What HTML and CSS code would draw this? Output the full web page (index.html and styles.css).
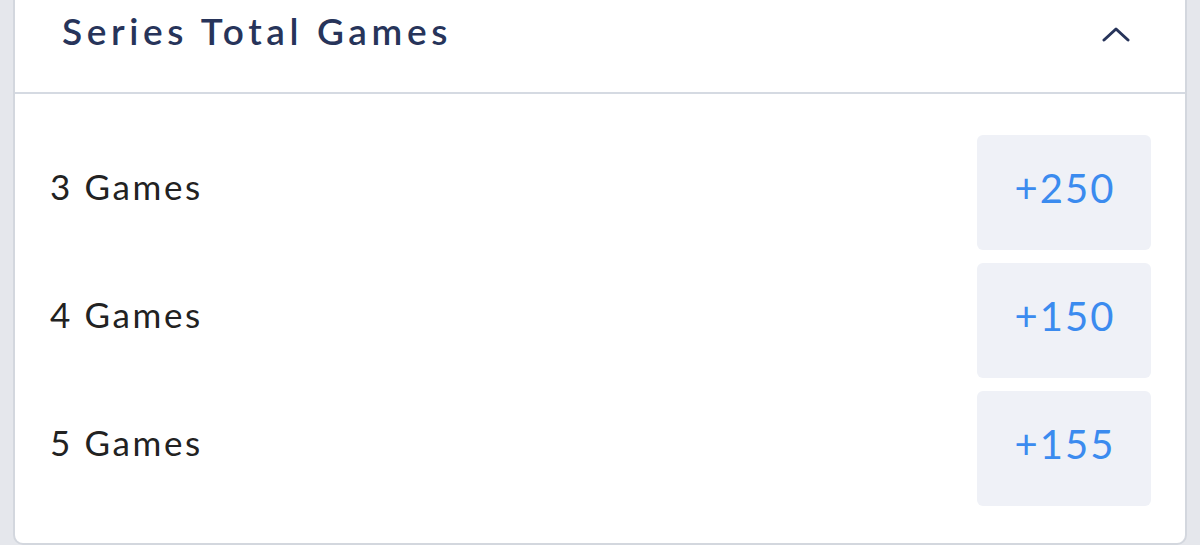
FILE: index.html
```html
<!DOCTYPE html>
<html lang="en">
<head>
  <meta charset="UTF-8">
  <meta name="viewport" content="width=device-width, initial-scale=1.0">
  <title>Series Total Games</title>
  <link rel="stylesheet" href="styles.css">
</head>
<body>
  <div class="market-card">
    <div class="market-header">
      <h2 class="market-title">Series Total Games</h2>
      <svg class="chevron" width="28" height="16" viewBox="0 0 28 16">
        <path d="M2 14 L14 3 L26 14" fill="none" stroke="#27345a" stroke-width="3" stroke-linecap="round" stroke-linejoin="round"/>
      </svg>
    </div>

    <div class="market-body">
      <div class="outcome-row">
        <span class="outcome-label">3 Games</span>
        <button class="odds-button">+250</button>
      </div>
      <div class="outcome-row">
        <span class="outcome-label">4 Games</span>
        <button class="odds-button">+150</button>
      </div>
      <div class="outcome-row">
        <span class="outcome-label">5 Games</span>
        <button class="odds-button">+155</button>
      </div>
    </div>
  </div>
</body>
</html>
```

FILE: styles.css
```css
body {
  margin: 0;
  background-color: #e5e7ec;
  font-family: Lato, "Open Sans", sans-serif;
}

.market-card {
  margin: 0 13px;
  background-color: #fff;
  border: 2px solid #d3d7de;
  border-top: none;
  border-radius: 0 0 10px 10px;
}

.market-header {
  height: 92px;
  display: flex;
  align-items: center;
  justify-content: space-between;
  padding: 0 55px 0 47px;
  border-bottom: 2px solid #d5dae2;
}

.market-title {
  margin: 0 0 32px 0;
  font-size: 37px;
  font-weight: 600;
  letter-spacing: 4.6px;
  color: #27345a;
}

.chevron {
  margin-bottom: 24px;
}

.market-body {
  display: flex;
  flex-direction: column;
  gap: 13px;
  padding: 41px 34px 37px 35px;
}

.outcome-row {
  display: flex;
  align-items: center;
  justify-content: space-between;
  height: 115px;
}

.outcome-label {
  margin-bottom: 13px;
  font-size: 35px;
  color: #222;
  letter-spacing: 2.6px;
}

.odds-button {
  width: 174px;
  height: 115px;
  padding: 0 0 10px 2px;
  border: none;
  border-radius: 6px;
  background-color: #eff1f7;
  color: #3b8bef;
  font-family: Lato, "Open Sans", sans-serif;
  font-size: 40px;
  letter-spacing: 2px;
  cursor: pointer;
}
```
